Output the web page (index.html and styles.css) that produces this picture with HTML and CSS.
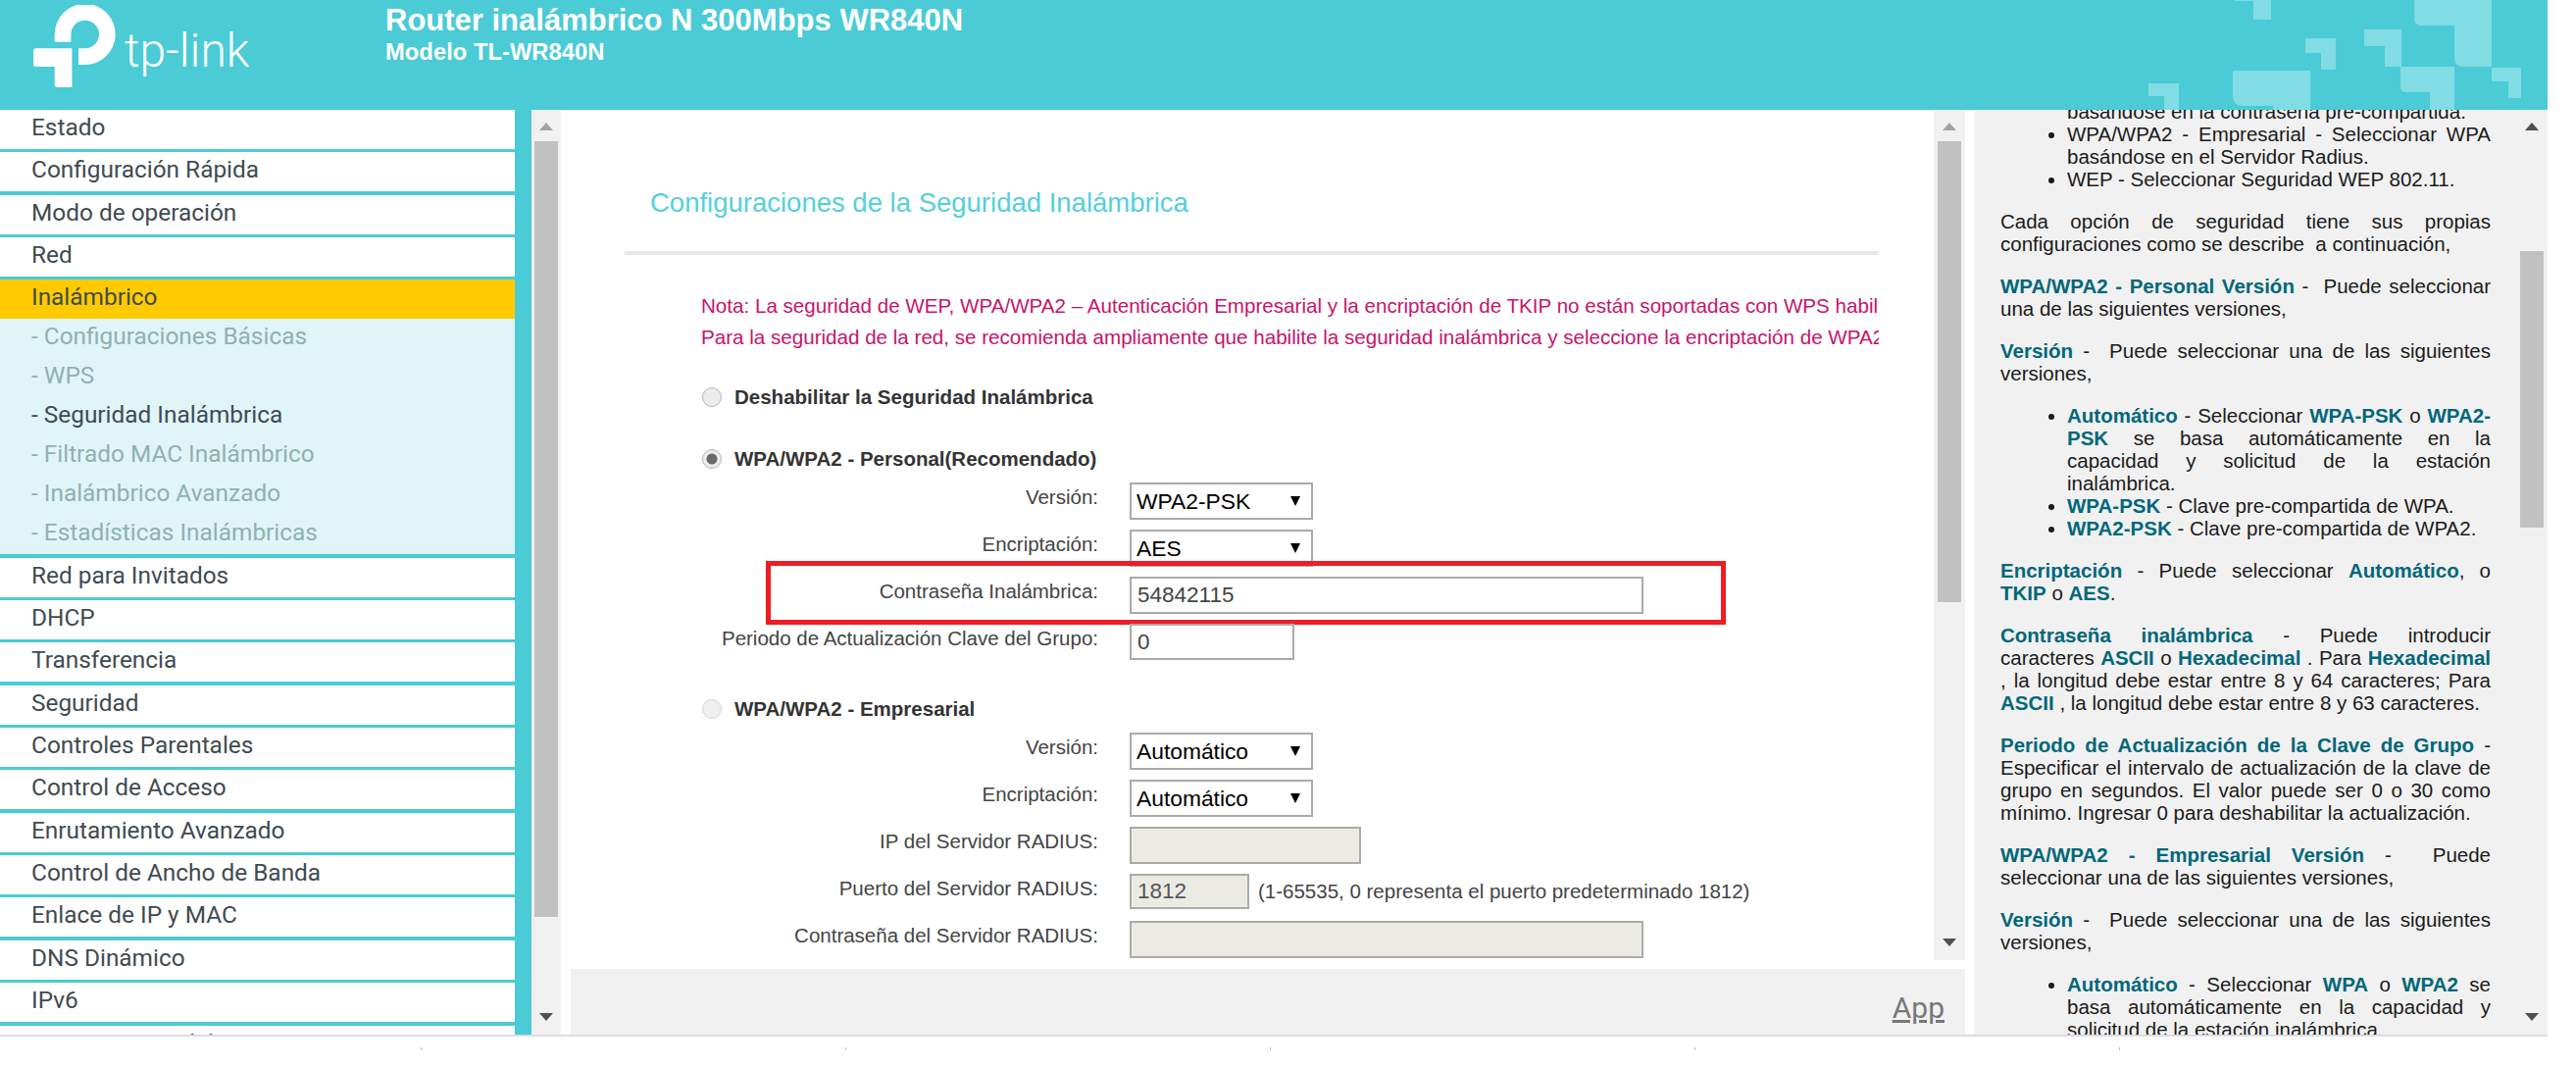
FILE: index.html
```html
<!DOCTYPE html>
<html lang="es">

<head>
    <meta charset="UTF-8">
    <meta name="viewport" content="width=device-width, initial-scale=1.0">
    <title>Router inalámbrico N 300Mbps WR840N</title>
    <link rel="stylesheet" href="styles.css">
</head>

<body>
    <div class="page">
        <header class="top">
            <div class="logo">
                <svg class="logo-mark" viewBox="34 5 84 84" aria-hidden="true">
                    <path d="M55.7 42.7V35A31 31 0 1 1 86.7 66H80V49.3H86.7A14.3 14.3 0 1 0 72.4 35V42.7Z" />
                    <path d="M34 52Q34 49.3 37 49.3H73.4V89H59Q55.7 89 55.7 86V68H37Q34 68 34 65Z" />
                </svg>
                <span class="logo-text">tp-link</span>
            </div>
            <div class="model">
                <h1>Router inalámbrico N 300Mbps WR840N</h1>
                <h2>Modelo TL-WR840N</h2>
            </div>
            <svg class="pattern" viewBox="2150 0 448 112" aria-hidden="true">
                <path d="M2279 0H2316V20H2298V1H2279Z" />
                <path d="M2351 39H2382V71H2367V54H2351Z" />
                <path d="M2411 30H2449V68H2432V47H2411Z" />
                <path d="M2462 0H2541V68H2512Q2503 68 2503 59V26H2470Q2462 26 2462 18Z" />
                <path d="M2448 68H2503V112H2478V94H2454Q2448 94 2448 88Z" />
                <path d="M2541 69H2571V100H2558V83H2541Z" />
                <path d="M2277 72H2356V112H2318V108H2288Q2277 108 2277 97Z" />
                <path d="M2191 85H2222V112H2207V98H2191Z" />
            </svg>
        </header>

        <div class="layout">
            <nav class="menu">
                <a class="item">Estado</a>
                <a class="item">Configuración Rápida</a>
                <a class="item">Modo de operación</a>
                <a class="item">Red</a>
                <a class="item item-open">Inalámbrico</a>
                <div class="submenu">
                    <a>- Configuraciones Básicas</a>
                    <a>- WPS</a>
                    <a class="sub-active">- Seguridad Inalámbrica</a>
                    <a>- Filtrado MAC Inalámbrico</a>
                    <a>- Inalámbrico Avanzado</a>
                    <a>- Estadísticas Inalámbricas</a>
                </div>
                <a class="item">Red para Invitados</a>
                <a class="item">DHCP</a>
                <a class="item">Transferencia</a>
                <a class="item">Seguridad</a>
                <a class="item">Controles Parentales</a>
                <a class="item">Control de Acceso</a>
                <a class="item">Enrutamiento Avanzado</a>
                <a class="item">Control de Ancho de Banda</a>
                <a class="item">Enlace de IP y MAC</a>
                <a class="item">DNS Dinámico</a>
                <a class="item">IPv6</a>
                <a class="item">Herramientas del Sistema</a>
            </nav>

            <div class="scroll scroll-menu">
                <i class="arrow-up arrow-off"></i>
                <i class="thumb"></i>
                <i class="arrow-down"></i>
            </div>

            <main class="center">
                <div class="frame">
                    <div class="pane">
                        <h3 class="title">Configuraciones de la Seguridad Inalámbrica</h3>
                        <p class="note note-first">Nota: La seguridad de WEP, WPA/WPA2 – Autenticación Empresarial y la encriptación de TKIP no están soportadas con WPS habilitado.</p>
                        <p class="note">Para la seguridad de la red, se recomienda ampliamente que habilite la seguridad inalámbrica y seleccione la encriptación de WPA2-PSK AES.</p>

                        <label class="choice choice-first"><input class="radio" type="radio" name="sec"> Deshabilitar la Seguridad Inalámbrica</label>
                        <label class="choice choice-second"><input class="radio" type="radio" name="sec" checked> WPA/WPA2 - Personal(Recomendado)</label>

                        <div class="row">
                            <span class="label">Versión:</span>
                            <span class="select-box"><select><option>WPA2-PSK</option></select></span>
                        </div>
                        <div class="row">
                            <span class="label">Encriptación:</span>
                            <span class="select-box"><select><option>AES</option></select></span>
                        </div>
                        <div class="row row-marked">
                            <span class="label">Contraseña Inalámbrica:</span>
                            <input class="field field-long" type="text" value="54842115">
                            <div class="mark"></div>
                        </div>
                        <div class="row">
                            <span class="label">Periodo de Actualización Clave del Grupo:</span>
                            <input class="field field-short" type="text" value="0">
                        </div>

                        <label class="choice choice-third"><input class="radio radio-off" type="radio" name="sec"> WPA/WPA2 - Empresarial</label>

                        <div class="row">
                            <span class="label">Versión:</span>
                            <span class="select-box"><select><option>Automático</option></select></span>
                        </div>
                        <div class="row">
                            <span class="label">Encriptación:</span>
                            <span class="select-box"><select><option>Automático</option></select></span>
                        </div>
                        <div class="row">
                            <span class="label">IP del Servidor RADIUS:</span>
                            <input class="field field-ip field-off" type="text">
                        </div>
                        <div class="row">
                            <span class="label">Puerto del Servidor RADIUS:</span>
                            <input class="field field-port field-off" type="text" value="1812">
                            <span class="hint">(1-65535, 0 representa el puerto predeterminado 1812)</span>
                        </div>
                        <div class="row">
                            <span class="label">Contraseña del Servidor RADIUS:</span>
                            <input class="field field-long field-off" type="text">
                        </div>
                    </div>
                    <div class="scroll scroll-pane">
                        <i class="arrow-up arrow-off"></i>
                        <i class="thumb"></i>
                        <i class="arrow-down"></i>
                    </div>
                </div>
                <div class="actions"><a class="apply">App</a></div>
            </main>

            <aside class="help">
                <div class="help-text">
                    <ul class="help-cut">
                        <li>WPA/WPA2 - Personal - Seleccionar WPA basándose en la contraseña pre-compartida.</li>
                        <li>WPA/WPA2 - Empresarial - Seleccionar WPA basándose en el Servidor Radius.</li>
                        <li>WEP - Seleccionar Seguridad WEP 802.11.</li>
                    </ul>
                    <p>Cada opción de seguridad tiene sus propias configuraciones como se describe&nbsp; a continuación,</p>
                    <p><b>WPA/WPA2 - Personal Versión</b> -&nbsp; Puede seleccionar una de las siguientes versiones,</p>
                    <p><b>Versión</b> -&nbsp; Puede seleccionar una de las siguientes versiones,</p>
                    <ul>
                        <li>
                            <span class="line"><b>Automático</b> - Seleccionar <b>WPA-PSK</b> o <b>WPA2-</b></span>
                            <span class="line"><b>PSK</b> se basa automáticamente en la</span>
                            <span class="line">capacidad y solicitud de la estación</span>
                            inalámbrica.
                        </li>
                        <li><b>WPA-PSK</b> - Clave pre-compartida de WPA.</li>
                        <li><b>WPA2-PSK</b> - Clave pre-compartida de WPA2.</li>
                    </ul>
                    <p><b>Encriptación</b> - Puede seleccionar <b>Automático</b>, o <b>TKIP</b> o <b>AES</b>.</p>
                    <p><b>Contraseña inalámbrica</b> - Puede introducir caracteres <b>ASCII</b> o <b>Hexadecimal</b> . Para <b>Hexadecimal</b> , la longitud debe estar entre 8 y 64 caracteres; Para <b>ASCII</b> , la longitud debe estar entre 8 y 63 caracteres.</p>
                    <p><b>Periodo de Actualización de la Clave de Grupo</b> - Especificar el intervalo de actualización de la clave de grupo en segundos. El valor puede ser 0 o 30 como mínimo. Ingresar 0 para deshabilitar la actualización.</p>
                    <p><b>WPA/WPA2 - Empresarial Versión</b> -&nbsp; Puede seleccionar una de las siguientes versiones,</p>
                    <p><b>Versión</b> -&nbsp; Puede seleccionar una de las siguientes versiones,</p>
                    <ul>
                        <li><b>Automático</b> - Seleccionar <b>WPA</b> o <b>WPA2</b> se basa automáticamente en la capacidad y solicitud de la estación inalámbrica.</li>
                    </ul>
                </div>
                <div class="scroll scroll-help">
                    <i class="arrow-up"></i>
                    <i class="thumb"></i>
                    <i class="arrow-down"></i>
                </div>
            </aside>
        </div>

        <footer class="bottom">
            <i></i><i></i><i></i><i></i><i></i>
        </footer>
    </div>
</body>

</html>
```

FILE: styles.css
```css
* {
    box-sizing: border-box;
    margin: 0;
    padding: 0;
}

body {
    background-color: white;
    height: 1087px;
    overflow: hidden;
    font-family: "Liberation Sans", Arial, sans-serif;
}

.page {
    width: 2598px;
}

/* header */
.top {
    height: 112px;
    background-color: #4acbd6;
    display: flex;
    position: relative;
    overflow: hidden;
}

.logo {
    width: 393px;
    flex-shrink: 0;
    padding-left: 34px;
    padding-top: 5px;
    display: flex;
    align-items: flex-start;
}

.logo-mark {
    width: 84px;
    height: 84px;
    fill: white;
}

.logo-text {
    margin-left: 9px;
    margin-top: 17px;
    color: white;
    font-family: Roboto, sans-serif;
    font-weight: 300;
    font-size: 48px;
    line-height: 60px;
}

.model {
    color: white;
    padding-top: 3px;
}

.model h1 {
    font-size: 31px;
    line-height: 36px;
}

.model h2 {
    font-size: 23.8px;
    line-height: 28px;
}

.pattern {
    position: absolute;
    right: 0;
    top: 0;
    width: 448px;
    height: 112px;
    fill: #81dce4;
}

/* main row */
.layout {
    height: 943px;
    display: flex;
    overflow: hidden;
}

.menu {
    width: 525px;
    flex-shrink: 0;
    background-color: #4acbd6;
    overflow: hidden;
    font-family: Roboto, sans-serif;
    font-size: 24.4px;
    color: #3f4b52;
    margin-right: 17px;
    box-shadow: 17px 0 0 #4acbd6;
}

.item {
    display: block;
    height: 40px;
    line-height: 36px;
    padding-left: 32px;
    margin-bottom: 3.35px;
    background-color: white;
}

.item-open {
    background-color: #ffcb00;
    margin-bottom: 0;
}

.submenu {
    background-color: #e0f5f8;
    margin-bottom: 3.35px;
}

.submenu a {
    display: block;
    height: 40px;
    line-height: 36px;
    padding-left: 32px;
    color: #8fb0b3;
}

.submenu .sub-active {
    color: #3f4b52;
}

/* scrollbars */
.scroll {
    flex-shrink: 0;
    background-color: #f1f1f1;
    display: flex;
    flex-direction: column;
    align-items: center;
    padding-top: 13px;
    padding-bottom: 14px;
}

.scroll-menu {
    width: 30px;
}

.scroll-pane {
    width: 32px;
}

.scroll-help {
    width: 32px;
}

.thumb {
    display: block;
    width: 24px;
    background-color: #c1c1c1;
    margin-top: 11px;
}

.scroll-menu .thumb {
    height: 791px;
}

.scroll-pane .thumb {
    height: 470px;
}

.scroll-help .thumb {
    height: 282px;
    margin-top: 123px;
}

.arrow-up {
    display: block;
    width: 0;
    height: 0;
    border-left: 7px solid transparent;
    border-right: 7px solid transparent;
    border-bottom: 8px solid #505050;
}

.arrow-off {
    border-bottom-color: #a3a3a3;
}

.arrow-down {
    display: block;
    width: 0;
    height: 0;
    margin-top: auto;
    border-left: 7px solid transparent;
    border-right: 7px solid transparent;
    border-top: 8px solid #505050;
}

/* centre column */
.center {
    width: 1432px;
    flex-shrink: 0;
    display: flex;
    flex-direction: column;
}

.frame {
    height: 867px;
    display: flex;
}

.pane {
    width: 1400px;
    padding-left: 65px;
    padding-right: 56px;
    overflow: hidden;
    color: #444;
    font-size: 20.5px;
}

.title {
    color: #55cfdc;
    font-weight: normal;
    font-size: 27.5px;
    line-height: 30px;
    padding-left: 26px;
    padding-top: 80px;
    padding-bottom: 34px;
    border-bottom: 4px solid #e8e8e8;
}

.note {
    color: #c7146b;
    font-size: 20.6px;
    line-height: 32px;
    margin-left: 78px;
    white-space: nowrap;
    overflow: hidden;
}

.note-first {
    margin-top: 36px;
}

.choice {
    display: flex;
    align-items: center;
    height: 24px;
    margin-left: 79px;
    color: #333;
    font-weight: bold;
    font-size: 20.5px;
    gap: 13px;
}

.choice-first {
    margin-top: 33px;
}

.choice-second {
    margin-top: 39px;
    margin-bottom: 12px;
}

.choice-third {
    margin-top: 37px;
    margin-bottom: 12px;
}

.radio {
    appearance: none;
    width: 20px;
    height: 20px;
    border-radius: 50%;
    border: 1px solid #b5b5b5;
    background-color: #ececec;
    flex-shrink: 0;
}

.radio:checked {
    background: radial-gradient(circle, #6a6a6a 0 5px, #ececec 6px);
}

.radio-off {
    border-color: #d4d4d4;
    background-color: #efefef;
}

.row {
    height: 38px;
    margin-bottom: 10px;
    display: flex;
    align-items: flex-start;
    position: relative;
}

.label {
    width: 483px;
    flex-shrink: 0;
    margin-right: 32px;
    text-align: right;
    line-height: 30px;
}

.select-box {
    display: block;
    position: relative;
    width: 187px;
    height: 38px;
}

.select-box::after {
    content: "";
    position: absolute;
    right: 13px;
    top: 14px;
    border-left: 5px solid transparent;
    border-right: 5px solid transparent;
    border-top: 10px solid black;
}

.select-box select {
    appearance: none;
    width: 100%;
    height: 100%;
    border: 2px solid #aaa;
    background-color: white;
    color: black;
    font-family: "Liberation Sans", Arial, sans-serif;
    font-size: 22.8px;
    padding-left: 5px;
}

.field {
    height: 38px;
    border: 2px solid #aaa;
    background-color: white;
    color: #444;
    font-family: "Liberation Sans", Arial, sans-serif;
    font-size: 22.5px;
    padding-left: 6px;
}

.field-long {
    width: 524px;
}

.field-short {
    width: 168px;
    height: 37px;
}

.field-ip {
    width: 236px;
}

.field-port {
    width: 122px;
    height: 36px;
}

.field-off {
    background-color: #ebebe4;
    color: #555;
}

.hint {
    margin-left: 9px;
    line-height: 36px;
    white-space: nowrap;
}

.mark {
    position: absolute;
    left: 144px;
    top: -16px;
    width: 979px;
    height: 65px;
    border: 5px solid #ee1c25;
}

.actions {
    height: 67px;
    margin-top: 9px;
    margin-left: 10px;
    background-color: #f1f1f1;
    text-align: right;
    padding-top: 22px;
    padding-right: 21px;
}

.apply {
    font-family: Roboto, sans-serif;
    font-size: 30px;
    line-height: 36px;
    color: #777;
    text-decoration: underline;
}

/* help panel */
.help {
    width: 584px;
    flex-shrink: 0;
    margin-left: 10px;
    background-color: #f1f1f1;
    display: flex;
}

.help-text {
    width: 552px;
    padding-left: 26px;
    padding-right: 26px;
    overflow: hidden;
    color: #1a1a1a;
    font-size: 20.5px;
    line-height: 23px;
    text-align: justify;
}

.help-text ul {
    padding-left: 68px;
    margin-bottom: 20px;
}

.help-text p {
    margin-bottom: 20px;
}

.help-text b {
    color: #00677a;
}

.help-cut {
    margin-top: -33px;
}

.line {
    display: block;
    text-align-last: justify;
}

/* footer */
.bottom {
    height: 32px;
    border-top: 2px solid #dcdce4;
    padding-left: 429px;
    padding-top: 11px;
    display: flex;
    gap: 432px;
}

.bottom i {
    display: block;
    width: 1px;
    height: 3px;
    background-color: #bbb;
}
```
